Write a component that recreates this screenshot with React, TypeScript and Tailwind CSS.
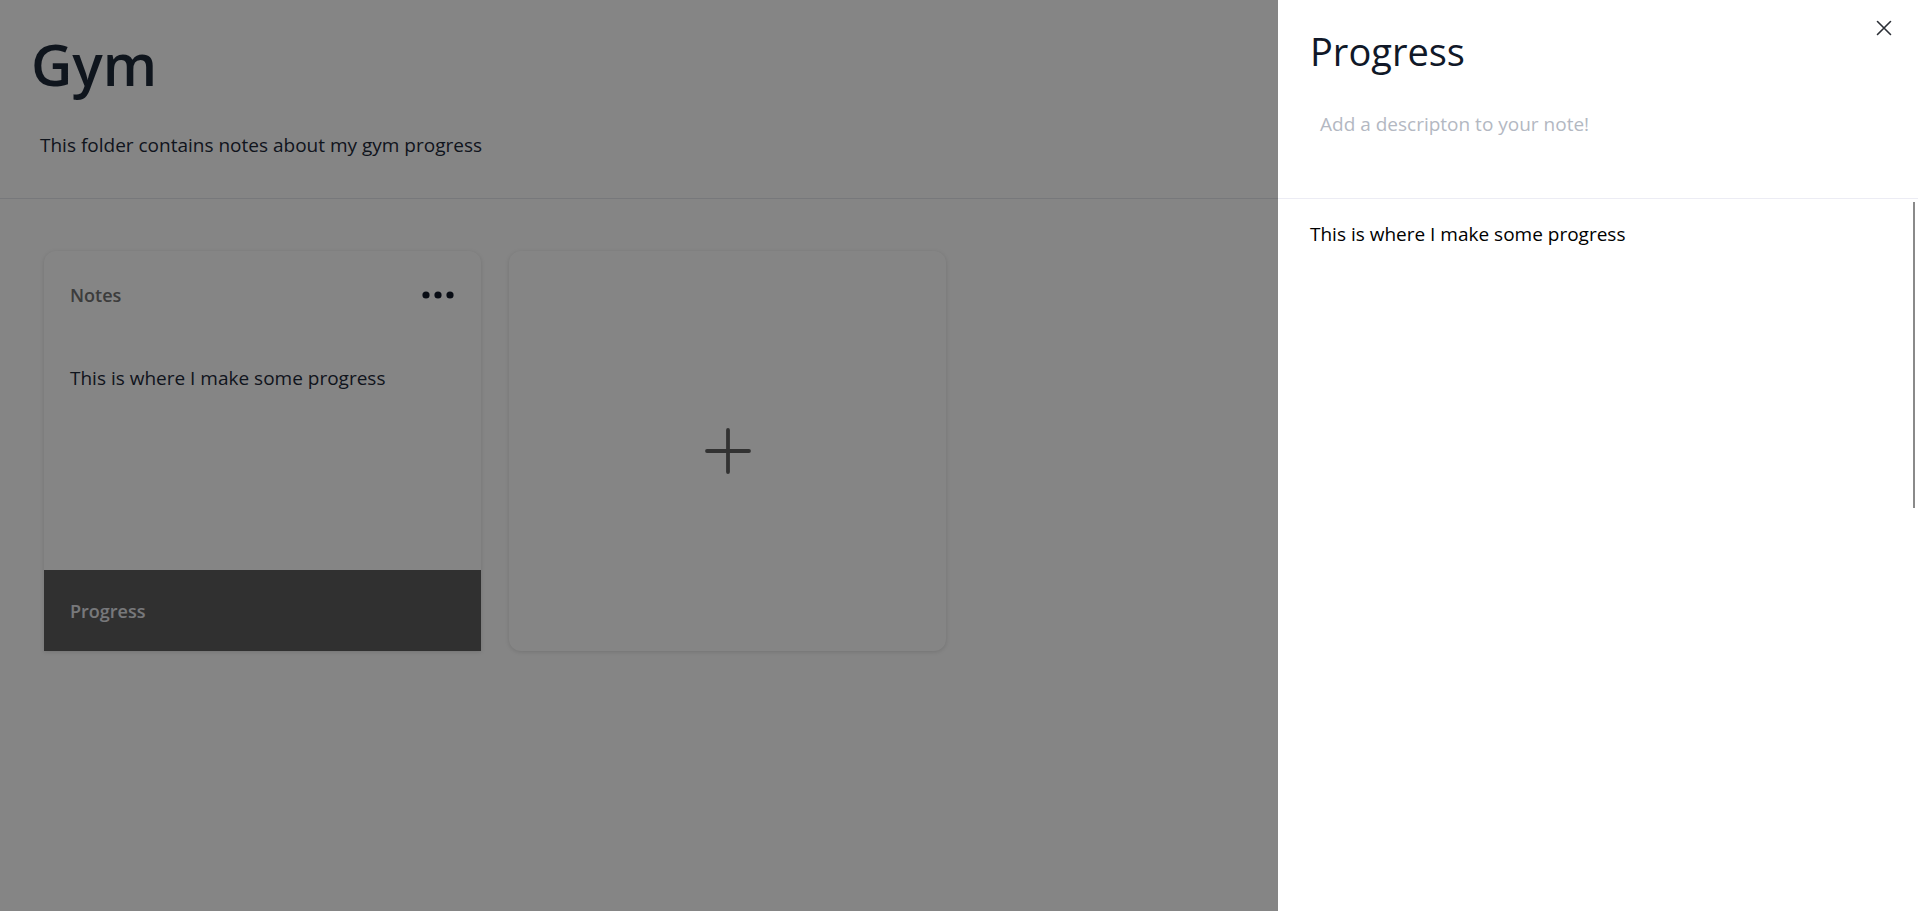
import React from "react";

const Dots = () => (
  <svg width="32" height="8" viewBox="0 0 32 8" className="text-gray-900">
    <circle cx="4" cy="4" r="3.6" fill="currentColor" />
    <circle cx="16" cy="4" r="3.6" fill="currentColor" />
    <circle cx="28" cy="4" r="3.6" fill="currentColor" />
  </svg>
);

const PlusIcon = () => (
  <svg width="48" height="48" viewBox="0 0 48 48" fill="none">
    <path
      d="M24 3v42M3 24h42"
      stroke="#616161"
      strokeWidth="3.8"
      strokeLinecap="round"
    />
  </svg>
);

const CloseIcon = () => (
  <svg width="16" height="16" viewBox="0 0 16 16" fill="none">
    <path
      d="M1.5 1.5l13 13M14.5 1.5l-13 13"
      stroke="#2b2f36"
      strokeWidth="1.6"
      strokeLinecap="round"
    />
  </svg>
);

const NoteCard = () => (
  <div className="w-[437px] h-[400px] flex flex-col rounded-t-xl bg-white shadow-[0_1px_4px_rgba(0,0,0,0.14)]">
    <div className="flex items-center justify-between px-[26px] pt-[32px]">
      <h3 className="text-lg leading-6 font-semibold text-neutral-500">Notes</h3>
      <button className="mr-[1px]">
        <Dots />
      </button>
    </div>
    <p className="px-[26px] mt-[57px] text-[19px] leading-7 text-gray-800">
      This is where I make some progress
    </p>
    <div className="flex-1" />
    <div className="h-[81px] flex items-center px-[26px] bg-[#5c5c5c]">
      <span className="text-lg font-semibold text-gray-200">Progress</span>
    </div>
  </div>
);

const AddCard = () => (
  <button className="w-[437px] h-[400px] flex items-center justify-center rounded-xl bg-white shadow-[0_1px_4px_rgba(0,0,0,0.14)]">
    <PlusIcon />
  </button>
);

export default function App() {
  return (
    <div className="relative h-[911px] w-full overflow-hidden bg-white font-['Open_Sans',sans-serif]">
      {/* folder page */}
      <div>
        <div className="h-[199px] border-b border-gray-200 px-[31px] pt-[36px]">
          <h1 className="text-[57px] leading-none font-semibold text-gray-800">Gym</h1>
          <p className="mt-[38px] pl-[9px] text-[19px] leading-7 text-gray-800">
            This folder contains notes about my gym progress
          </p>
        </div>
        <div className="flex gap-[28px] pl-[44px] pt-[52px]">
          <NoteCard />
          <AddCard />
        </div>
      </div>

      {/* backdrop */}
      <div className="absolute inset-0 bg-black/[0.48]" />

      {/* note drawer */}
      <aside className="absolute right-0 top-0 h-full w-[640px] bg-white flex flex-col">
        <button className="absolute right-[26px] top-[20px]">
          <CloseIcon />
        </button>
        <div className="h-[199px] border-b border-[#ececf4] px-[32px] pt-[27px]">
          <h2 className="text-[38px] leading-[48px] text-gray-900">Progress</h2>
          <p className="mt-[35px] pl-[10px] text-[19px] leading-7 text-[#b3b8c2]">
            Add a descripton to your note!
          </p>
        </div>
        <div className="flex flex-1">
          <p className="flex-1 px-[32px] pt-[21px] text-[19px] leading-7 text-black">
            This is where I make some progress
          </p>
          <div className="w-[5px] pt-[3px]">
            <div className="w-[2px] h-[306px] bg-[#8a8a8a]" />
          </div>
        </div>
      </aside>
    </div>
  );
}
